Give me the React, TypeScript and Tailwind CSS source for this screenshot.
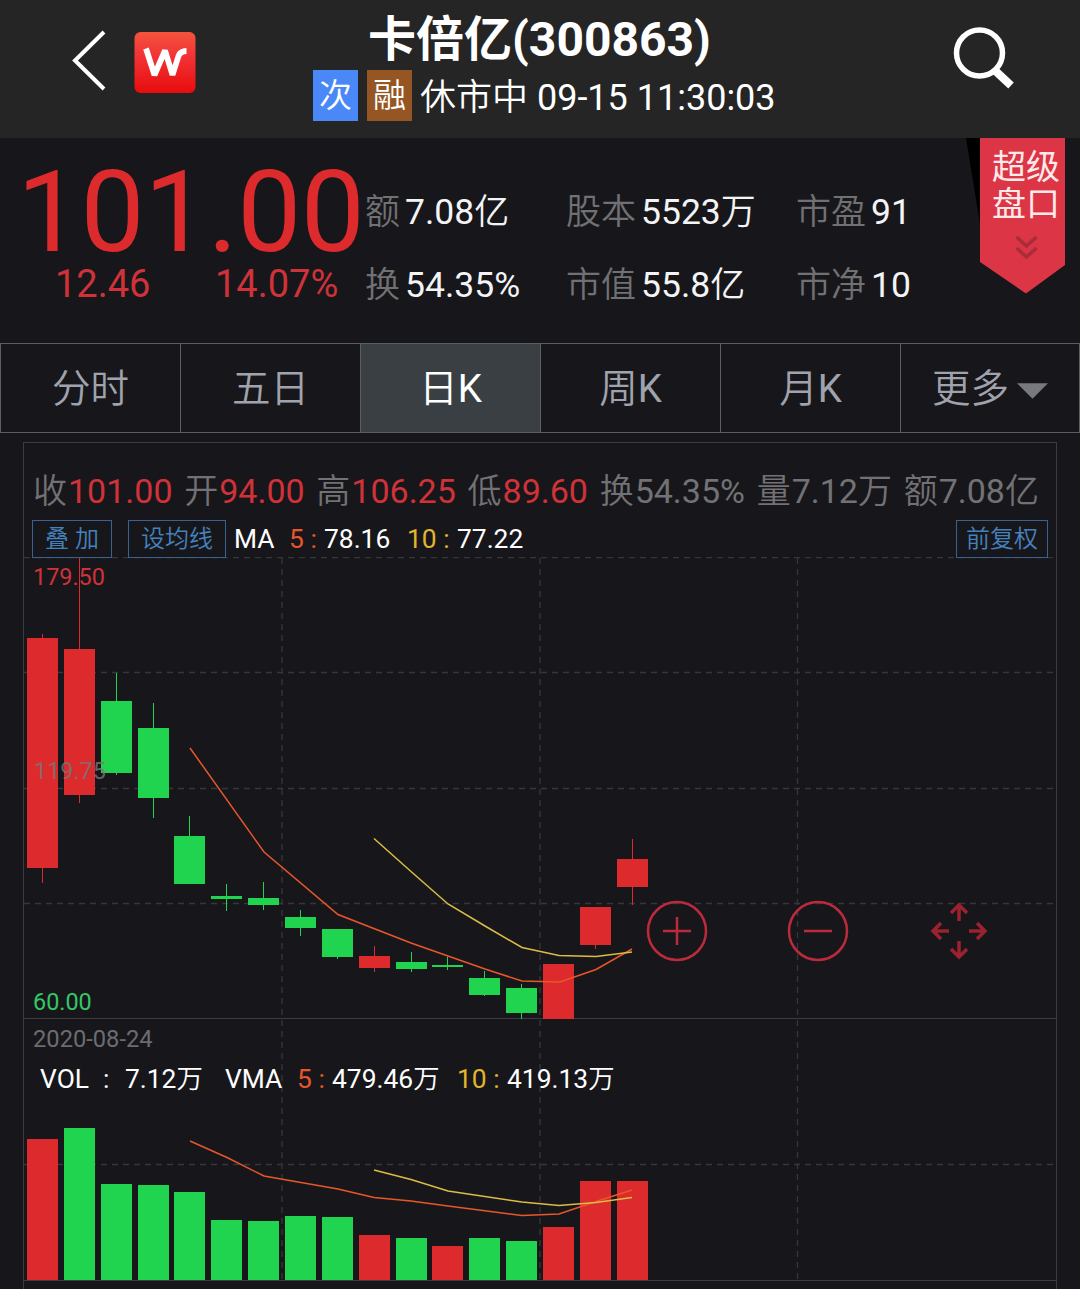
'use client'

import { useState } from 'react'

const RED = '#dd2a2d'
const GREEN = '#20d44f'

const stats = [
  { label: '额', value: '7.08', unit: '亿' },
  { label: '股本', value: '5523', unit: '万' },
  { label: '市盈', value: '91', unit: '' },
  { label: '换', value: '54.35%', unit: '' },
  { label: '市值', value: '55.8', unit: '亿' },
  { label: '市净', value: '10', unit: '' },
]

const tabs = ['分时', '五日', '日K', '周K', '月K', '更多']

const dayInfo = [
  { label: '收', value: '101.00', unit: '', up: true },
  { label: '开', value: '94.00', unit: '', up: true },
  { label: '高', value: '106.25', unit: '', up: true },
  { label: '低', value: '89.60', unit: '', up: true },
  { label: '换', value: '54.35%', unit: '', up: false },
  { label: '量', value: '7.12', unit: '万', up: false },
  { label: '额', value: '7.08', unit: '亿', up: false },
]

// x, body top, body bottom, wick top, wick bottom, volume top, candle color, volume color
const candles: [number, number, number, number, number, number, string, string][] = [
  [27, 638, 868, 634, 883, 1139, RED, RED],
  [64, 649, 795, 557, 803, 1128, RED, GREEN],
  [101, 701, 773, 673, 775, 1184, GREEN, GREEN],
  [138, 728, 798, 703, 818, 1185, GREEN, GREEN],
  [174, 836, 884, 816, 884, 1192, GREEN, GREEN],
  [211, 896, 899, 884, 911, 1220, GREEN, GREEN],
  [248, 898, 905, 882, 910, 1221, GREEN, GREEN],
  [285, 917, 928, 910, 936, 1216, GREEN, GREEN],
  [322, 929, 957, 929, 959, 1217, GREEN, GREEN],
  [359, 956, 968, 946, 972, 1235, RED, RED],
  [396, 962, 969, 952, 972, 1238, GREEN, GREEN],
  [432, 965, 967, 957, 970, 1246, GREEN, RED],
  [469, 978, 995, 971, 996, 1238, GREEN, GREEN],
  [506, 988, 1013, 984, 1019, 1241, GREEN, GREEN],
  [543, 964, 1019, 964, 1019, 1227, RED, RED],
  [580, 907, 945, 907, 949, 1181, RED, RED],
  [617, 859, 887, 839, 905, 1181, RED, RED],
]

function Header() {
  return (
    <header className="flex h-[138px] items-start bg-[#252525]">
      <div className="flex w-[313px] items-start pt-[28px] pl-[70px]">
        <svg className="h-[64px] w-[38px]" viewBox="0 0 38 64" fill="none" stroke="#fff" strokeWidth="4">
          <path d="M34 4 5 32.5 34 61" />
        </svg>
        <svg className="mt-[3px] ml-[26px] h-[63px] w-[62px]" viewBox="0 0 62 63">
          <defs>
            <linearGradient id="logo" x1="0" y1="0" x2="0" y2="1">
              <stop offset="0" stopColor="#f4533c" />
              <stop offset="0.4" stopColor="#f23336" />
              <stop offset="1" stopColor="#e80c0c" />
            </linearGradient>
          </defs>
          <rect x="0.5" y="1" width="61" height="61" rx="6" fill="url(#logo)" />
          <path
            d="M12 17.500 20.500 44 31 19.500 38.500 44 44.500 25Q46.500 20 52.500 20"
            fill="none"
            stroke="#fff"
            strokeWidth="5.800"
            strokeLinejoin="bevel"
          />
        </svg>
      </div>
      <div className="flex w-[461px] flex-col">
        <h1 className="mt-[10px] pr-[8px] text-center text-[48px] leading-[60px] font-bold whitespace-nowrap">
          卡倍亿(300863)
        </h1>
        <div className="flex h-[51px] items-center text-[36px] leading-[51px] whitespace-nowrap">
          <span className="w-[45px] shrink-0 bg-[#4b88f7] text-center text-[33px] font-[350]">次</span>
          <span className="ml-[9px] w-[45px] shrink-0 bg-[#955624] text-center text-[33px] font-[350]">融</span>
          <span className="ml-[8px] pt-[5px]">
            <span className="font-[350]">休市中</span> 09-15 11:30:03
          </span>
        </div>
      </div>
      <svg className="mt-[24px] ml-[176px] h-[68px] w-[68px]" viewBox="0 0 68 68" fill="none" stroke="#fff">
        <circle cx="29.5" cy="29" r="23" strokeWidth="5.5" />
        <path d="M44.500 46 61 61.500" strokeWidth="8" />
      </svg>
    </header>
  )
}

function Ribbon() {
  return (
    <div className="relative h-[160px] w-[99px] shrink-0">
      <svg className="absolute inset-0 h-[160px] w-[99px]" viewBox="966 138 99 160">
        <path d="M966 138H981V230Z" fill="#000" />
        <path d="M980 138H1065V265L1026 293.500 980 262Z" fill="#dc3545" />
        <g fill="none" stroke="#a82c3b" strokeWidth="3.500">
          <path d="M1016.500 237 1026.500 246 1036.500 237" />
          <path d="M1016.500 248 1026.500 257 1036.500 248" />
        </g>
      </svg>
      <div className="relative pt-[11px] pl-[26px] text-[34px] leading-[37px] text-[#ffe9e9]">
        <div>超级</div>
        <div>盘口</div>
      </div>
    </div>
  )
}

function Quote() {
  return (
    <section className="flex h-[205px]">
      <div className="w-[365px] pl-[17px] text-[#dd2a2d]">
        <div className="mt-[19px] text-[114px] leading-[110px] tracking-[-0.5px] whitespace-nowrap">101.00</div>
        <div className="mt-[-2px] flex pl-[38px] text-[38px] leading-[38px] text-[#cf3238]">
          <span className="w-[160px]">12.46</span>
          <span>14.07%</span>
        </div>
      </div>
      <div className="grid w-[601px] grid-cols-[201px_230px_170px] grid-rows-[73px_73px] pt-[38px] text-[35.5px] leading-[73px] whitespace-nowrap">
        {stats.map((s) => (
          <div key={s.label} className="flex gap-[5px]">
            <span className="text-[35px] font-[350] text-[#717174]">{s.label}</span>
            <span className="text-[#f4f4f6]">
              {s.value}
              <span className="text-[35px] font-[350]">{s.unit}</span>
            </span>
          </div>
        ))}
      </div>
      <Ribbon />
    </section>
  )
}

function Tabs({ active, onChange }: { active: string; onChange: (tab: string) => void }) {
  return (
    <nav className="flex h-[90px] border-y border-r border-[#5c5e61] text-[38.5px]">
      {tabs.map((tab) => (
        <button
          key={tab}
          onClick={() => onChange(tab)}
          className={`flex w-[180px] shrink-0 items-center justify-center border-l border-[#5c5e61] pt-[1px] font-[350] last:w-[179px] ${
            tab === active ? 'bg-[#3a3f44] text-white' : 'text-[#a0a3ad]'
          }`}
        >
          {tab.replace('K', '')}
          {tab.endsWith('K') && <span className="font-normal">K</span>}
          {tab === '更多' && (
            <svg className="mt-[5px] ml-[8px] h-[16px] w-[31px]" viewBox="0 0 32 16">
              <path d="M0 0H32L16 16Z" fill="#77797f" />
            </svg>
          )}
        </button>
      ))}
    </nav>
  )
}

function Chart() {
  return (
    <svg className="block h-[732px] w-[1032px]" viewBox="24 557 1032 732">
      <g stroke="#36373a" strokeWidth="1.300" strokeDasharray="6 5" fill="none">
        <path d="M24 557.500H1056M24 672.500H1056M24 788.500H1056M24 903.500H1056M24 1164.500H1056" />
        <path d="M282 558V1280M540 558V1280M797.500 558V1280" />
      </g>
      <path d="M24 1018.500H1056M24 1280.500H1056" stroke="#3b3c3f" />

      {candles.map(([x, top, bottom, high, low, vol, color, volColor]) => (
        <g key={x}>
          <rect x={x + 15} y={high} width="1" height={low - high} fill={color} />
          <rect x={x} y={top} width="31" height={bottom - top} fill={color} />
          <rect x={x} y={vol} width="31" height={1280 - vol} fill={volColor} />
        </g>
      ))}

      <g fill="none" strokeWidth="1.500" stroke="#e8562a">
        <path d="M190 748 264 852 338 914.500 411 943 448 956 485 969 522 981 560 982 596 969.500 632 949" />
        <path d="M190 1141 227 1157.500 264 1176 338 1189 374 1197.500 411 1201 448 1206 522 1215.500 559 1214 596 1201.500 632 1190" />
      </g>
      <g fill="none" strokeWidth="1.500" stroke="#dcbc45">
        <path d="M374 838.500 411 871.500 448 904 485 926 522 947.500 559 955.500 596 956.500 632 952" />
        <path d="M374 1170 411 1179.500 448 1191 522 1202 559 1205.500 596 1202.500 632 1197.500" />
      </g>

      <g fontSize="23.400">
        <text x="33" y="585" fill="#cf3238">179.50</text>
        <text x="34" y="779" fill="#77777a" fillOpacity="0.8">119.75</text>
        <text x="33" y="1010" fill="#35c766">60.00</text>
        <text x="33" y="1047" fontSize="23.700" fill="#6c6c70">2020-08-24</text>
      </g>

      <g fontSize="26.400" fill="#fff">
        <text x="40" y="1088">VOL</text>
        <text x="103" y="1088">:</text>
        <text x="125" y="1088">7.12<tspan fontWeight="350">万</tspan></text>
        <text x="225" y="1088">VMA</text>
        <text x="297" y="1088" fill="#e8562a">5 :</text>
        <text x="332" y="1088">479.46<tspan fontWeight="350">万</tspan></text>
        <text x="457" y="1088" fill="#e0b62c">10 :</text>
        <text x="507" y="1088">419.13<tspan fontWeight="350">万</tspan></text>
      </g>

      <g fill="none" stroke="#bd2a3b" strokeWidth="2.500">
        <circle cx="677" cy="931" r="29" />
        <path d="M663 931H691M677 917V945" />
        <circle cx="818" cy="931" r="29" />
        <path d="M804 931H832" />
      </g>
      <g fill="none" stroke="#9c2230" strokeWidth="3.500">
        <path d="M959 921V905M951 913 959 905 967 913" />
        <path d="M959 941V957M951 949 959 957 967 949" />
        <path d="M949 931H933M941 923 933 931 941 939" />
        <path d="M969 931H985M977 923 985 931 977 939" />
      </g>
    </svg>
  )
}

export default function App() {
  const [active, setActive] = useState('日K')

  return (
    <div className="h-[1289px] w-[1080px] overflow-hidden bg-[#17171b] font-[Roboto,'Noto_Sans_CJK_SC',sans-serif] text-white">
      <Header />
      <Quote />
      <Tabs active={active} onChange={setActive} />

      <section className="mx-[23px] mt-[9px] border-x border-t border-[#3b3c3f]">
        <div className="flex h-[76px] items-center justify-between pt-[21px] pr-[17px] pl-[9px] text-[34px] whitespace-nowrap">
          {dayInfo.map((item) => (
            <div key={item.label} className="text-[#727275]">
              <span className="mr-[1px] font-[350]">{item.label}</span>
              <span className={item.up ? 'text-[#cf3238]' : ''}>{item.value}</span>
              <span className="font-[350]">{item.unit}</span>
            </div>
          ))}
        </div>
        <div className="relative z-10 flex h-[38px] items-center pr-[8px] pl-[8px] text-[26.4px] leading-[40px] whitespace-nowrap">
          <button className="mt-[1px] h-[38px] w-[80px] border border-[#386390] pt-[1px] text-[24px] leading-[35px] font-[350] text-[#4582bd]">
            叠 加
          </button>
          <button className="mt-[1px] ml-[16px] h-[38px] w-[98px] border border-[#386390] pt-[1px] text-[24px] leading-[35px] font-[350] text-[#4582bd]">
            设均线
          </button>
          <span className="ml-[8px] w-[55px] pt-[2px]">MA</span>
          <span className="w-[35px] pt-[2px] text-[#e8562a]">5 :</span>
          <span className="w-[83px] pt-[2px]">78.16</span>
          <span className="w-[50px] pt-[2px] text-[#e0b62c]">10 :</span>
          <span className="pt-[2px]">77.22</span>
          <button className="mt-[1px] ml-auto h-[38px] w-[92px] border border-[#386390] pt-[1px] text-[24px] leading-[35px] font-[350] text-[#4582bd]">
            前复权
          </button>
        </div>
        <Chart />
      </section>
    </div>
  )
}
